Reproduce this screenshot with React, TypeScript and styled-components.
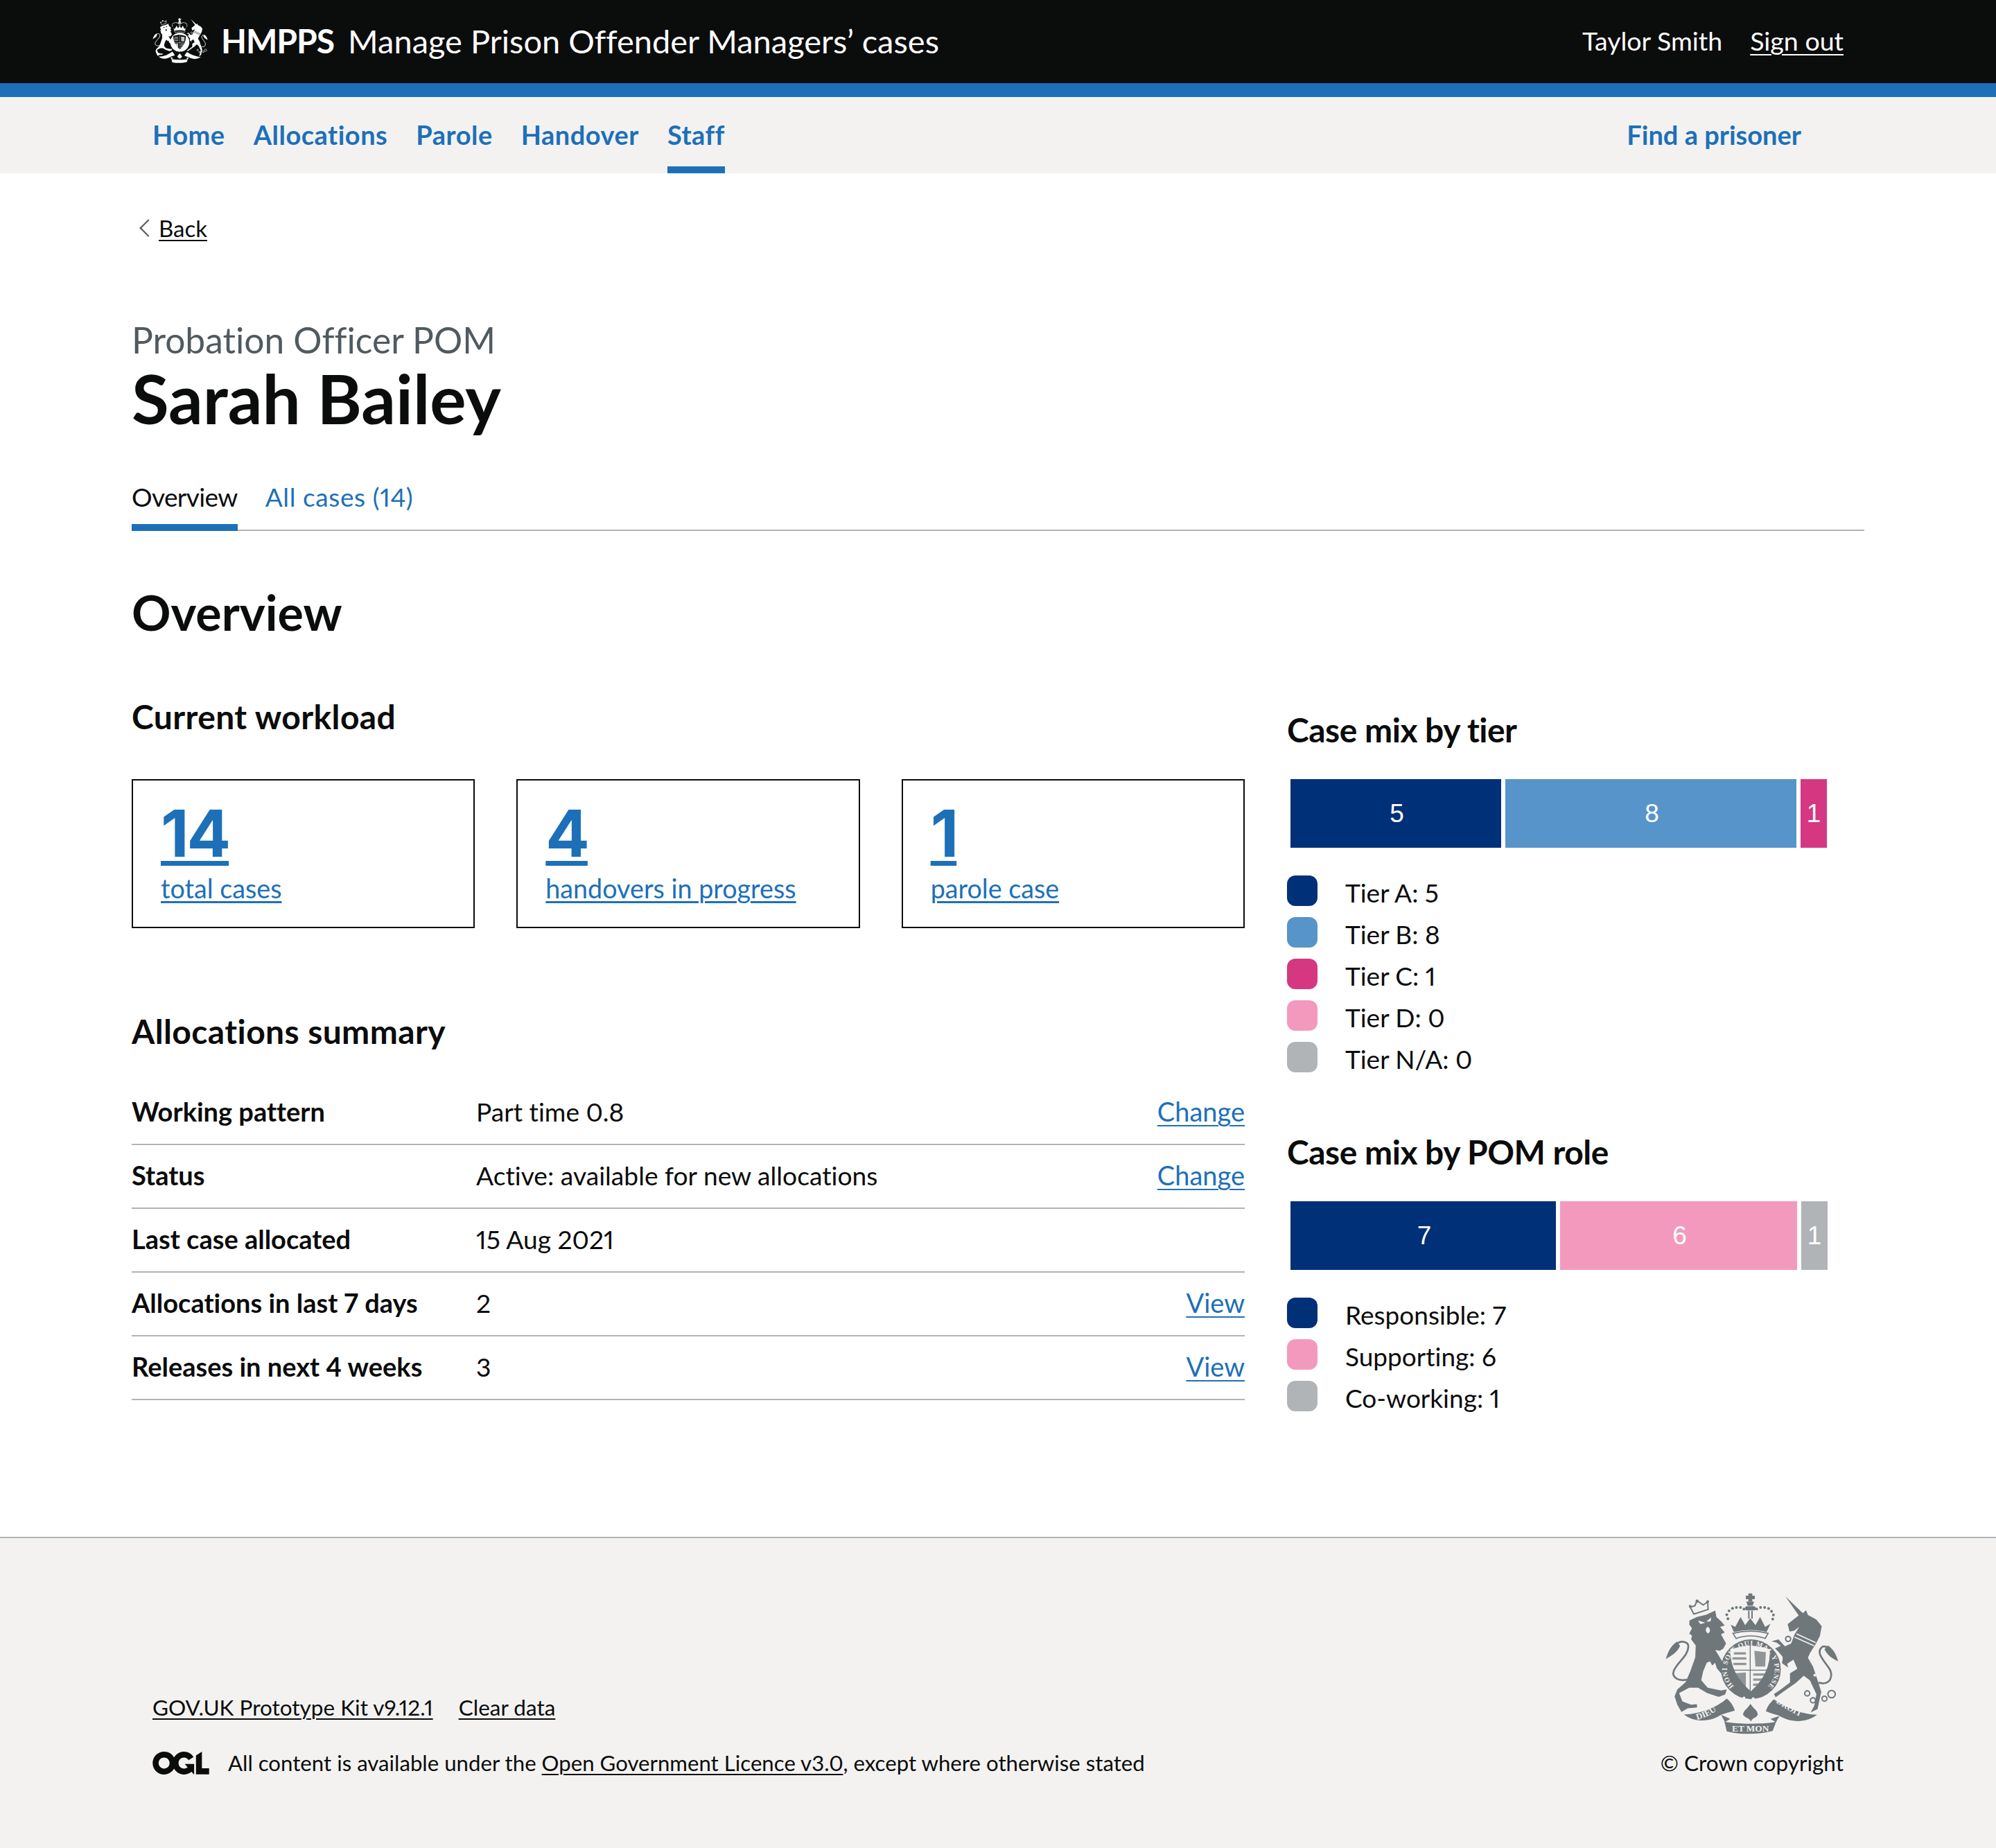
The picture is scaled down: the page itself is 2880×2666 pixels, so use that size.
import React from "react";
import styled, { createGlobalStyle } from "styled-components";

const FONT = `Lato, "Noto Sans", "Liberation Sans", sans-serif`;
const BLACK = "#0b0c0c";
const BLUE = "#1d70b8";
const GREY_BG = "#f3f2f1";
const RULE = "#b1b4b6";

const GlobalStyle = createGlobalStyle`
  html, body {
    margin: 0;
    padding: 0;
    background: #fff;
    color: ${BLACK};
    font-family: ${FONT};
    font-variant-ligatures: none;
    font-variant-numeric: proportional-nums;
  }
  * { box-sizing: border-box; }
`;

const Page = styled.div`
  width: 2880px;
  height: 2666px;
  overflow: hidden;
  display: flex;
  flex-direction: column;
`;

const Header = styled.header`
  height: 140px;
  flex: none;
  background: ${BLACK};
  border-bottom: 20px solid ${BLUE};
  color: #fff;
  display: flex;
  align-items: center;
  padding: 0 220px 3px;
`;

const CrestSlot = styled.span`
  display: block;
  width: 80px;
  height: 65px;
  margin-right: 19px;
`;

const Org = styled.span`
  font-size: 48px;
  font-weight: 700;
  letter-spacing: -1px;
  margin-right: 20px;
`;

const Service = styled.span`
  font-size: 47px;
  font-weight: 400;
`;

const HeaderUser = styled.div`
  margin-left: auto;
  display: flex;
  gap: 40px;
  font-size: 37.5px;
  align-items: center;
`;

const SignOut = styled.a`
  color: #fff;
  text-decoration: underline;
  text-decoration-thickness: 2px;
  text-underline-offset: 5px;
`;

const NavBar = styled.nav`
  height: 110px;
  flex: none;
  background: ${GREY_BG};
  display: flex;
  padding: 0 281px 0 220px;
  gap: 41px;
`;

const NavItem = styled.a<{ $active?: boolean; $end?: boolean }>`
  display: flex;
  align-items: center;
  height: 110px;
  font-size: 38px;
  font-weight: 700;
  letter-spacing: ${(p) => (p.$end ? "0" : "0.5px")};
  color: ${BLUE};
  padding-top: 8px;
  border-bottom: 10px solid ${(p) => (p.$active ? BLUE : "transparent")};
  margin-left: ${(p) => (p.$end ? "auto" : "0")};
`;

const Main = styled.main`
  flex: 1;
  padding: 0 190px;
`;

const BackLink = styled.a`
  display: flex;
  width: fit-content;
  align-items: center;
  margin: 57px 0 0 15px;
  height: 44px;
  font-size: 33px;
  color: ${BLACK};
  text-decoration: underline;
  text-decoration-thickness: 2px;
  text-underline-offset: 4px;

  &::before {
    content: "";
    display: block;
    width: 16px;
    height: 16px;
    margin-right: 6px;
    border-left: 2px solid #505a5f;
    border-bottom: 2px solid #505a5f;
    transform: rotate(45deg);
  }
`;

const Caption = styled.div`
  margin-top: 107px;
  font-size: 51.5px;
  line-height: 64px;
  color: #505a5f;
`;

const Title = styled.h1`
  margin: -3px 0 0;
  font-size: 98px;
  line-height: 110px;
  font-weight: 700;
`;

const Tabs = styled.div`
  margin-top: 50px;
  display: flex;
  gap: 40px;
  height: 87px;
  border-bottom: 2px solid ${RULE};
`;

const Tab = styled.a<{ $active?: boolean }>`
  display: block;
  height: 87px;
  font-size: 37px;
  line-height: 76px;
  letter-spacing: ${(p) => (p.$active ? "-0.6px" : "0.6px")};
  color: ${(p) => (p.$active ? BLACK : BLUE)};
  border-bottom: ${(p) => (p.$active ? `10px solid ${BLUE}` : "none")};
`;

const SectionTitle = styled.h2`
  margin: 72px 0 0;
  font-size: 70px;
  line-height: 90px;
  font-weight: 700;
`;

const Columns = styled.div`
  margin-top: 76px;
  display: grid;
  grid-template-columns: 1606px 1fr;
  column-gap: 61px;
`;

const Heading = styled.h3<{ $top?: number }>`
  margin: ${(p) => p.$top ?? 0}px 0 0;
  font-size: 48px;
  line-height: 60px;
  font-weight: 700;
  letter-spacing: 0.4px;
`;

const SideHeading = styled(Heading)`
  letter-spacing: -0.5px;
`;

const Cards = styled.div`
  margin-top: 60px;
  display: grid;
  grid-template-columns: repeat(3, 1fr);
  column-gap: 60px;
`;

const Card = styled.a`
  display: block;
  height: 215px;
  border: 2px solid ${BLACK};
  padding: 34px 40px;
  color: ${BLUE};
`;

const CardNumber = styled.span`
  display: block;
  font-family: Inter, "Liberation Sans", sans-serif;
  font-size: 94px;
  line-height: 84px;
  font-weight: 700;
  letter-spacing: -3px;
  text-decoration: underline;
  text-decoration-thickness: 7px;
  text-underline-offset: 6px;
  width: fit-content;
`;

const CardLabel = styled.span`
  display: block;
  margin-top: 14px;
  font-size: 37.7px;
  line-height: 48px;
  text-decoration: underline;
  text-decoration-thickness: 3px;
  text-underline-offset: 4px;
  width: fit-content;
`;

const SummaryList = styled.div`
  margin-top: 42px;
`;

const SummaryRow = styled.div`
  display: grid;
  grid-template-columns: 497px 1fr auto;
  align-items: center;
  height: 92px;
  padding-bottom: 4px;
  border-bottom: 2px solid ${RULE};
  font-size: 37.2px;
`;

const SummaryKey = styled.div`
  font-size: 38px;
  font-weight: 700;
`;

const SummaryAction = styled.a`
  color: ${BLUE};
  font-size: 38px;
  text-decoration: underline;
  text-decoration-thickness: 2px;
  text-underline-offset: 5px;
`;

const Bar = styled.div`
  margin: 41px 0 0 5px;
  display: flex;
  gap: 6px;
  height: 99px;
`;

const Segment = styled.div<{ $color: string; $width: number }>`
  width: ${(p) => p.$width}px;
  background: ${(p) => p.$color};
  color: #fff;
  display: flex;
  align-items: center;
  justify-content: center;
  padding-left: ${(p) => (p.$width > 60 ? 3 : 0)}px;
  font-size: 37px;
  font-family: "Liberation Sans", sans-serif;
`;

const Legend = styled.ul`
  list-style: none;
  margin: 34px 0 0;
  padding: 0;
`;

const LegendItem = styled.li`
  display: flex;
  align-items: center;
  height: 60px;
  font-size: 37px;
`;

const Swatch = styled.span<{ $color: string }>`
  width: 44px;
  height: 44px;
  border-radius: 12px;
  margin: -5px 40px 0 0;
  background: ${(p) => p.$color};
`;

const Footer = styled.footer`
  height: 449px;
  flex: none;
  background: ${GREY_BG};
  border-top: 2px solid ${RULE};
  padding: 0 220px;
  display: flex;
  justify-content: space-between;
  align-items: flex-end;
`;

const FooterLeft = styled.div`
  padding-bottom: 104px;
  font-size: 31.2px;
`;

const FooterLinks = styled.div`
  display: flex;
  gap: 37px;
  margin-bottom: 42px;
  font-size: 31.5px;
`;

const FooterLink = styled.a`
  color: ${BLACK};
  text-decoration: underline;
  text-decoration-thickness: 2px;
  text-underline-offset: 4px;
`;

const Licence = styled.div`
  display: flex;
  align-items: center;
  gap: 27px;
`;

const FooterRight = styled.div`
  padding-bottom: 104px;
  display: flex;
  flex-direction: column;
  align-items: flex-end;
  font-size: 31.5px;
`;

const FooterCrestSlot = styled.span`
  display: block;
  width: 250px;
  height: 204px;
  margin: 0 7px 22px 0;
`;

const CrestSvg = styled.svg`
  display: block;
  width: 100%;
  height: 100%;
`;

const MottoText = styled.text`
  font-family: "Liberation Serif", serif;
  font-weight: 700;
`;

const Crest = ({ ink, paper, lettered }: { ink: string; paper: string; lettered?: boolean }) => (
  <CrestSvg viewBox="190 120 750 615" aria-hidden="true">
    <defs>
      <path id="crest-ring" d="M 486.5 525.5 A 104 104 0 1 1 633.5 525.5" />
      <path id="crest-dieu" d="M 326 672 C 370 660 405 640 440 606" />
      <path id="crest-droit" d="M 668 596 C 705 620 750 650 800 668" />
    </defs>
    {/* lion */}
    <path
      fill={ink}
      d="M293 240 L325 225 L365 215 L405 197 L410 225 L430 243 L446 262 L426 268 L446 292 L430 300 L452 340 L440 362 L425 372 L405 368 L440 425 L468 455 L458 474 L430 470 L412 448 L404 424 L392 436 L382 418 L368 424 L352 462 L344 500 L372 532 L430 544 L455 540 L448 562 L420 572 L370 556 L330 532 L292 532 L248 556 L262 592 L300 606 L325 604 L326 618 L285 622 L258 638 L240 606 L228 570 L240 540 L276 508 L296 462 L318 400 L320 348 L300 322 L304 306 L292 296 L304 274 L292 258 Z"
    />
    <path fill="none" stroke={ink} strokeWidth="8" d="M282 497 C250 505 212 490 225 458 C240 420 288 395 288 352 C288 330 250 325 236 345" />
    <path fill={ink} d="M238 332 C212 350 198 378 190 408 C215 392 238 382 252 350 Z" />
    <path fill={paper} d="M330 240 L362 250 L340 256 Z M366 244 L388 226 L384 244 Z M372 268 C384 272 386 292 374 296 C362 292 360 274 372 268 Z" />
    <path fill="none" stroke={ink} strokeWidth="6" d="M296 182 L312 212 L374 192 L372 160 L352 172 L326 154 L316 176 Z" />
    <circle cx="296" cy="178" r="6" fill={ink} />
    <circle cx="326" cy="156" r="7" fill={ink} />
    <circle cx="372" cy="158" r="6" fill={ink} />
    {/* unicorn */}
    <path
      fill={ink}
      d="M710 135 L786 208 L800 195 L808 216 L845 236 L868 265 L860 308 L842 342 L818 380 L808 402 L830 440 L852 505 L866 550 L850 625 L820 640 L836 610 L845 560 L816 500 L790 480 L755 512 L700 550 L668 574 L660 560 L690 540 L730 510 L730 470 L762 450 L745 410 L718 428 L722 445 L695 425 L700 400 L680 376 L665 362 L690 350 L672 336 L650 330 L680 322 L708 352 L735 340 L750 300 L770 268 L748 284 L728 288 L720 256 L768 218 Z"
    />
    <path fill="none" stroke={paper} strokeWidth="5" d="M750 312 L835 350 M758 298 L842 336" />
    <path fill="none" stroke={ink} strokeWidth="8" d="M855 510 C905 525 925 480 895 440 C865 400 845 375 870 355 C885 345 905 365 915 385" />
    <path fill={ink} d="M895 348 C920 365 932 390 940 418 C915 405 895 395 880 365 Z" />
    <g fill="none" stroke={ink} strokeWidth="6">
      <circle cx="722" cy="320" r="11" />
      <circle cx="712" cy="403" r="11" />
      <circle cx="805" cy="557" r="11" />
      <circle cx="830" cy="587" r="11" />
      <circle cx="880" cy="580" r="11" />
      <circle cx="911" cy="560" r="16" />
    </g>
    <g fill={paper}>
      <circle cx="846" cy="428" r="9" />
      <circle cx="812" cy="510" r="8" />
      <circle cx="838" cy="478" r="6" />
    </g>
    {/* crown */}
    <g fill={ink}>
      <path d="M549 122 H566 V132 H577 V147 H566 V158 H549 V147 H538 V132 H549 Z" />
      <path d="M540 158 H574 L568 176 H546 Z" />
      {[
        [460, 232], [455, 215], [465, 198], [480, 187], [497, 183], [515, 183], [530, 190],
        [585, 190], [602, 183], [620, 183], [637, 188], [650, 200], [658, 216], [655, 234],
      ].map(([cx, cy]) => (
        <circle key={`${cx}-${cy}`} cx={cx} cy={cy} r="6" />
      ))}
      <rect x="535" y="178" width="46" height="18" rx="8" />
      <rect x="548" y="198" width="6" height="34" />
      <rect x="562" y="198" width="6" height="34" />
      <path d="M472 258 L492 268 L515 225 L535 260 L557 230 L580 260 L600 225 L622 268 L645 254 L628 290 Q557 272 486 290 Z" />
      <path d="M482 296 Q557 276 635 296 L622 318 Q557 296 496 318 Z" fill="none" stroke={ink} strokeWidth="5" />
    </g>
    {/* garter + shield */}
    <circle cx="560" cy="452" r="130" fill={ink} />
    <path
      fill={paper}
      d="M470 365 Q515 352 555 348 Q600 352 642 365 Q648 470 560 548 Q468 470 470 365 Z"
    />
    <g fill={ink}>
      <rect x="555" y="348" width="4" height="205" />
      <rect x="468" y="454" width="176" height="4" />
      <g opacity="0.75">
        <rect x="486" y="378" width="52" height="10" />
        <rect x="480" y="400" width="60" height="10" />
        <rect x="484" y="424" width="56" height="10" />
        <path d="M575 372 L625 378 L622 440 L580 440 Z" />
        <rect x="570" y="470" width="54" height="10" />
        <rect x="570" y="492" width="46" height="10" />
        <rect x="570" y="514" width="32" height="10" />
        <path d="M488 470 L538 466 L538 528 L520 526 Z" />
      </g>
    </g>
    {lettered && (
      <MottoText fontSize="30" fill={paper}>
        <textPath href="#crest-ring" textLength="490" lengthAdjust="spacing">
          HONI SOIT QUI MAL Y PENSE
        </textPath>
      </MottoText>
    )}
    <circle cx="530" cy="577" r="6" fill={paper} />
    <circle cx="570" cy="580" r="6" fill={paper} />
    {/* motto ribbon */}
    <g fill={ink}>
      <path d="M268 648 C330 650 410 620 455 580 C475 595 485 615 490 632 C465 640 445 645 430 650 C400 672 330 694 268 648 Z" />
      <path d="M848 650 C790 650 710 620 660 583 C640 600 630 620 625 635 C650 645 670 650 685 655 C720 677 790 694 848 650 Z" />
      <path d="M445 680 C500 692 620 692 670 680 L655 720 C600 737 510 737 455 722 Z" />
      <path d="M430 650 C440 670 448 680 445 683 L470 668 Z M685 655 C675 670 670 680 670 683 L645 668 Z" />
      <path d="M558 602 C572 625 590 630 590 650 C580 668 568 660 560 680 C552 660 538 668 526 650 C526 630 545 625 558 602 Z" />
    </g>
    {lettered && (
      <MottoText fontSize="38" fill={paper}>
        <textPath href="#crest-dieu">DIEU</textPath>
      </MottoText>
    )}
    {lettered && (
      <MottoText fontSize="38" fill={paper}>
        <textPath href="#crest-droit">DROIT</textPath>
      </MottoText>
    )}
    {lettered && (
      <MottoText x="558" y="722" fontSize="40" fill={paper} textAnchor="middle">
        ET MON
      </MottoText>
    )}
  </CrestSvg>
);

const OglLogo = () => (
  <svg width="82" height="33" viewBox="0 0 483.2 195.7" aria-hidden="true">
    <path
      fill={BLACK}
      d="M421.5 142.8V.1l-50.7 32.3v161.1h112.4v-50.7zm-122.3-9.6A47.12 47.12 0 0 1 221 97.8c0-26 21.1-47.1 47.1-47.1 16.7 0 31.4 8.7 39.7 21.8l42.7-27.2A97.63 97.63 0 0 0 268.1 0c-36.5 0-68.3 20.1-85.1 49.7A98 98 0 0 0 97.8 0C43.9 0 0 43.9 0 97.8s43.9 97.8 97.8 97.8c36.5 0 68.3-20.1 85.1-49.7a97.76 97.76 0 0 0 149.6 25.4l19.4 22.2h3v-87.8h-80l24.3 27.5zM97.8 145c-26 0-47.1-21.1-47.1-47.1s21.1-47.1 47.1-47.1 47.2 21 47.2 47S123.8 145 97.8 145"
    />
  </svg>
);

const NAVY = "#003078";
const LIGHT_BLUE = "#5694ca";
const PINK = "#d53880";
const LIGHT_PINK = "#f499be";
const GREY = "#b1b4b6";

const tierBar = [
  { value: 5, color: NAVY, width: 304 },
  { value: 8, color: LIGHT_BLUE, width: 420 },
  { value: 1, color: PINK, width: 38 },
];
const tierLegend = [
  { label: "Tier A: 5", color: NAVY },
  { label: "Tier B: 8", color: LIGHT_BLUE },
  { label: "Tier C: 1", color: PINK },
  { label: "Tier D: 0", color: LIGHT_PINK },
  { label: "Tier N/A: 0", color: GREY },
];
const roleBar = [
  { value: 7, color: NAVY, width: 383 },
  { value: 6, color: LIGHT_PINK, width: 342 },
  { value: 1, color: GREY, width: 38 },
];
const roleLegend = [
  { label: "Responsible: 7", color: NAVY },
  { label: "Supporting: 6", color: LIGHT_PINK },
  { label: "Co-working: 1", color: GREY },
];
const summary = [
  { key: "Working pattern", value: "Part time 0.8", action: "Change" },
  { key: "Status", value: "Active: available for new allocations", action: "Change" },
  { key: "Last case allocated", value: "15 Aug 2021" },
  { key: "Allocations in last 7 days", value: "2", action: "View" },
  { key: "Releases in next 4 weeks", value: "3", action: "View" },
];
const cards = [
  { count: "14", label: "total cases" },
  { count: "4", label: "handovers in progress" },
  { count: "1", label: "parole case" },
];

type BarItem = { value: number; color: string; width: number };
type LegendEntry = { label: string; color: string };

const CaseMix = ({ bar, legend }: { bar: BarItem[]; legend: LegendEntry[] }) => (
  <>
    <Bar>
      {bar.map((s) => (
        <Segment key={s.color} $color={s.color} $width={s.width}>
          {s.value}
        </Segment>
      ))}
    </Bar>
    <Legend>
      {legend.map((l) => (
        <LegendItem key={l.label}>
          <Swatch $color={l.color} />
          {l.label}
        </LegendItem>
      ))}
    </Legend>
  </>
);

export default function App() {
  return (
    <Page>
      <GlobalStyle />
      <Header>
        <CrestSlot>
          <Crest ink="#ffffff" paper={BLACK} />
        </CrestSlot>
        <Org>HMPPS</Org>
        <Service>Manage Prison Offender Managers’ cases</Service>
        <HeaderUser>
          <span>Taylor Smith</span>
          <SignOut>Sign out</SignOut>
        </HeaderUser>
      </Header>
      <NavBar>
        <NavItem>Home</NavItem>
        <NavItem>Allocations</NavItem>
        <NavItem>Parole</NavItem>
        <NavItem>Handover</NavItem>
        <NavItem $active>Staff</NavItem>
        <NavItem $end>Find a prisoner</NavItem>
      </NavBar>
      <Main>
        <BackLink>Back</BackLink>
        <Caption>Probation Officer POM</Caption>
        <Title>Sarah Bailey</Title>
        <Tabs>
          <Tab $active>Overview</Tab>
          <Tab>All cases (14)</Tab>
        </Tabs>
        <SectionTitle>Overview</SectionTitle>
        <Columns>
          <div>
            <Heading>Current workload</Heading>
            <Cards>
              {cards.map((c) => (
                <Card key={c.label}>
                  <CardNumber>{c.count}</CardNumber>
                  <CardLabel>{c.label}</CardLabel>
                </Card>
              ))}
            </Cards>
            <Heading $top={119}>Allocations summary</Heading>
            <SummaryList>
              {summary.map((r) => (
                <SummaryRow key={r.key}>
                  <SummaryKey>{r.key}</SummaryKey>
                  <div>{r.value}</div>
                  {r.action ? <SummaryAction>{r.action}</SummaryAction> : <span />}
                </SummaryRow>
              ))}
            </SummaryList>
          </div>
          <div>
            <SideHeading $top={19}>Case mix by tier</SideHeading>
            <CaseMix bar={tierBar} legend={tierLegend} />
            <SideHeading $top={75}>Case mix by POM role</SideHeading>
            <CaseMix bar={roleBar} legend={roleLegend} />
          </div>
        </Columns>
      </Main>
      <Footer>
        <FooterLeft>
          <FooterLinks>
            <FooterLink>GOV.UK Prototype Kit v9.12.1</FooterLink>
            <FooterLink>Clear data</FooterLink>
          </FooterLinks>
          <Licence>
            <OglLogo />
            <span>
              All content is available under the <FooterLink>Open Government Licence v3.0</FooterLink>, except
              where otherwise stated
            </span>
          </Licence>
        </FooterLeft>
        <FooterRight>
          <FooterCrestSlot>
            <Crest ink="#6f777b" paper={GREY_BG} lettered />
          </FooterCrestSlot>
          <span>© Crown copyright</span>
        </FooterRight>
      </Footer>
    </Page>
  );
}
